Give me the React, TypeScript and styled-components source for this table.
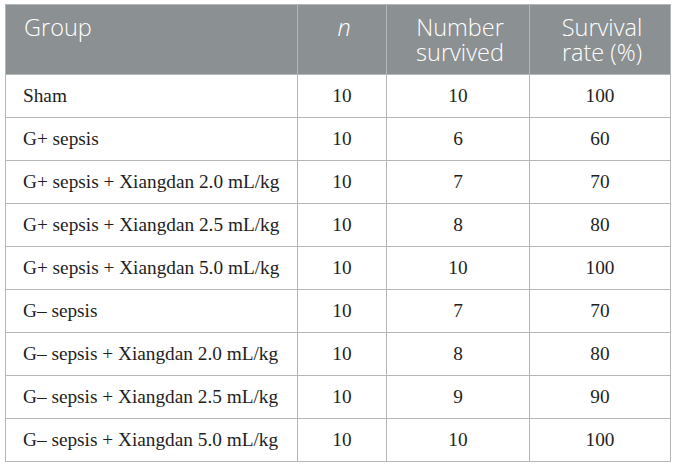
import React from 'react';
import { createGlobalStyle, styled } from 'styled-components';

const GlobalStyle = createGlobalStyle`
body {
  margin: 0;
  background: #ffffff;
}
`

const Wrap = styled.div`
padding: 4px 0 0 5px;
`

const Table = styled.table`
width: 665px;
border-collapse: collapse;
table-layout: fixed;
border: 1px solid #b4b6b7;
`

const Head = styled.th<{ $align?: string; $italic?: boolean }>`
background: #8b9092;
color: #ffffff;
font-family: 'Open Sans', 'Lato', sans-serif;
font-weight: 350;
font-size: 23.5px;
line-height: 25px;
height: 70px;
box-sizing: border-box;
padding: 10px 14px 0 18px;
vertical-align: top;
text-align: ${p => p.$align || 'center'};
font-style: ${p => p.$italic ? 'italic' : 'normal'};
border-left: 1px solid #b4b6b7;
`

const Cell = styled.td<{ $align?: string }>`
font-family: 'Liberation Serif', 'Times New Roman', serif;
font-size: 19.3px;
color: #1e1e1e;
height: 43px;
box-sizing: border-box;
padding: 0 17px 1px 17px;
text-align: ${p => p.$align || 'center'};
vertical-align: middle;
border: 1px solid #b4b6b7;
`

const rows = [
    ['Sham', '10', '10', '100'],
    ['G+ sepsis', '10', '6', '60'],
    ['G+ sepsis + Xiangdan 2.0 mL/kg', '10', '7', '70'],
    ['G+ sepsis + Xiangdan 2.5 mL/kg', '10', '8', '80'],
    ['G+ sepsis + Xiangdan 5.0 mL/kg', '10', '10', '100'],
    ['G\u2013 sepsis', '10', '7', '70'],
    ['G\u2013 sepsis + Xiangdan 2.0 mL/kg', '10', '8', '80'],
    ['G\u2013 sepsis + Xiangdan 2.5 mL/kg', '10', '9', '90'],
    ['G\u2013 sepsis + Xiangdan 5.0 mL/kg', '10', '10', '100'],
];

export default function App() {
    return (
        <Wrap>
            <GlobalStyle />
            <Table>
                <colgroup>
                    <col style={{ width: 292 }} />
                    <col style={{ width: 89 }} />
                    <col style={{ width: 143 }} />
                    <col style={{ width: 141 }} />
                </colgroup>
                <thead>
                    <tr>
                        <Head $align="left">Group</Head>
                        <Head $italic>n</Head>
                        <Head>Number survived</Head>
                        <Head>Survival rate (%)</Head>
                    </tr>
                </thead>
                <tbody>
                    {rows.map(([group, n, num, rate]) => (
                        <tr key={group}>
                            <Cell $align="left">{group}</Cell>
                            <Cell>{n}</Cell>
                            <Cell>{num}</Cell>
                            <Cell>{rate}</Cell>
                        </tr>
                    ))}
                </tbody>
            </Table>
        </Wrap>
    )
}
